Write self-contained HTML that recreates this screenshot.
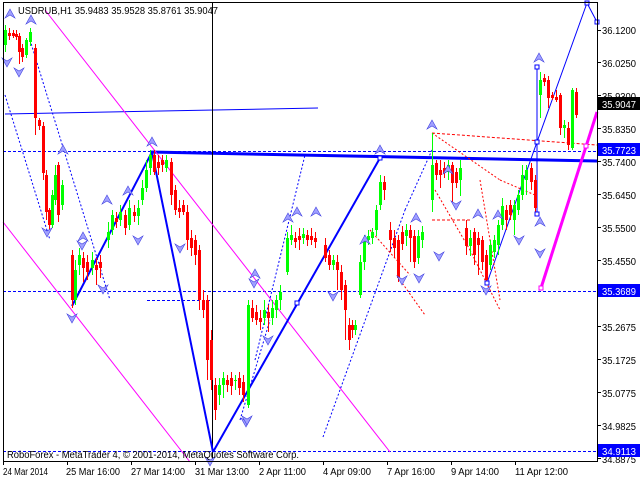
<!DOCTYPE html>
<html><head><meta charset="utf-8"><style>
html,body{margin:0;padding:0;background:#fff;}
svg{display:block;font-family:"Liberation Sans",sans-serif;font-size:10px;}
</style></head><body>
<svg id="c" width="640" height="480" xmlns="http://www.w3.org/2000/svg">
<rect width="640" height="480" fill="#fff"/>
<g id="g"></g>
<path d="M3.5 2 V461.5 H597.5 V2" fill="none" stroke="#000" stroke-width="1"/>
<path d="M3 2.5 H597" stroke="#000"/>
<g fill="#000" id="pl"></g>
<rect x="598" y="97" width="42" height="13" fill="#000"/><text x="602" y="108" fill="#fff" textLength="34" lengthAdjust="spacingAndGlyphs">35.9047</text>
<rect x="598" y="143" width="42" height="13" fill="#0000ff"/><text x="602" y="154" fill="#fff" textLength="34" lengthAdjust="spacingAndGlyphs">35.7723</text>
<rect x="598" y="284" width="42" height="13" fill="#0000ff"/><text x="602" y="295" fill="#fff" textLength="34" lengthAdjust="spacingAndGlyphs">35.3689</text>
<rect x="598" y="444" width="42" height="13" fill="#0000ff"/><text x="602" y="455" fill="#fff" textLength="34" lengthAdjust="spacingAndGlyphs">34.9113</text>
<g fill="#000">
<text x="3" y="475" textLength="45" lengthAdjust="spacingAndGlyphs">24 Mar 2014</text>
<text x="66" y="475" textLength="54" lengthAdjust="spacingAndGlyphs">25 Mar 16:00</text>
<text x="131" y="475" textLength="54" lengthAdjust="spacingAndGlyphs">27 Mar 14:00</text>
<text x="195" y="475" textLength="54" lengthAdjust="spacingAndGlyphs">31 Mar 13:00</text>
<text x="259" y="475" textLength="47" lengthAdjust="spacingAndGlyphs">2 Apr 11:00</text>
<text x="323" y="475" textLength="48" lengthAdjust="spacingAndGlyphs">4 Apr 09:00</text>
<text x="387" y="475" textLength="48" lengthAdjust="spacingAndGlyphs">7 Apr 16:00</text>
<text x="451" y="475" textLength="48" lengthAdjust="spacingAndGlyphs">9 Apr 14:00</text>
<text x="515" y="475" textLength="53" lengthAdjust="spacingAndGlyphs">11 Apr 12:00</text>
</g>
<text x="18" y="14" fill="#000" textLength="200" lengthAdjust="spacingAndGlyphs">USDRUB,H1  35.9483 35.9528 35.8761 35.9047</text>
<text x="7" y="458" fill="#000" textLength="292" lengthAdjust="spacingAndGlyphs">RoboForex - MetaTrader 4, © 2001-2014, MetaQuotes Software Corp.</text>
</svg>
<script>
var g=document.getElementById('g'),s='';
var P=[[34,'36.1200'],[67,'36.0250'],[100,'35.9300'],[133,'35.8350'],[166,'35.7400'],[199,'35.6450'],[232,'35.5500'],[265,'35.4550'],[331,'35.2675'],[364,'35.1725'],[397,'35.0775'],[430,'34.9825'],[463,'34.8875']],ps='';
P.forEach(function(p){ps+='<text x="602" y="'+p[0]+'" textLength="34" lengthAdjust="spacingAndGlyphs">'+p[1]+'</text>';});
document.getElementById('pl').innerHTML=ps;
function L(x1,y1,x2,y2,c,w,d){s+='<line x1="'+x1+'" y1="'+y1+'" x2="'+x2+'" y2="'+y2+'" stroke="'+c+'" stroke-width="'+(w||1)+'"'+(d?' stroke-dasharray="'+d+'"':'')+'/>';}
[3,67,131,195,259,323,387,451,515].forEach(function(x){L(x+0.5,461,x+0.5,465,'#000');});
[30,62,95,128,161,194,227,260,293,326,359,392,425,458].forEach(function(y){L(597,y+0.5,601,y+0.5,'#000');});
L(3,151.5,597,151.5,'#0000ff',1,'3,2');
L(3,291.5,597,291.5,'#0000ff',1,'3,2');
L(3,451.5,597,451.5,'#0000ff',1,'3,2');
L(147,300.5,210,300.5,'#0000ff',1,'3,2');
L(5,114,318,108,'#0000ff',1);
L(150,152,597,161,'#0000ff',3);
L(212.5,2,212.5,461,'#000',1);
L(45,10,390,452,'#ff00ff',1);
L(3,222,190,462,'#ff00ff',1);
L(541,288,597,112,'#ff00ff',3);
L(72,306,152,152,'#0000ff',2);L(152,152,213,452,'#0000ff',2);L(213,452,380,158,'#0000ff',2);
L(487,283,537,142,'#0000ff',1);L(537,142,587,3,'#0000ff',1);L(587,3,597,22,'#0000ff',1);L(537,68,537,214,'#0000ff',1);
L(5,95,50,240,'#0000ff',1,'2,2');L(30,40,110,300,'#0000ff',1,'2,2');
L(255,360,305,155,'#0000ff',1,'2,2');L(323,437,405,210,'#0000ff',1,'2,2');L(405,210,432,150,'#0000ff',1,'2,2');
L(240,420,270,320,'#0000ff',1,'2,2');
L(432,133,597,145,'#ff0000',1,'3,2');L(432,133,500,180,'#ff0000',1,'2,2');L(500,180,535,195,'#ff0000',1,'2,2');
L(432,220,470,220,'#ff0000',1,'3,2');L(435,190,470,250,'#ff0000',1,'2,2');L(470,250,500,310,'#ff0000',1,'2,2');
L(400,280,425,315,'#ff0000',1,'2,2');L(480,180,500,300,'#ff0000',1,'2,2');
L(370,230,410,275,'#ff0000',1,'2,2');
var C=[[5,45,30,25,52],[9,33,36,28,40],[13,33,36,30,38],[16,34,37,30,40],[19,36,52,33,64],[22,48,57,44,62],[26,55,40,38,58],[30,42,32,28,46],
[35,48,118,44,135],[39,120,126,118,130],[43,126,173,122,180],[46,175,212,170,220],[49,210,225,208,232],[52,225,195,190,228],[55,200,175,165,205],[58,165,215,162,222],[62,205,185,180,210],
[72,255,300,250,308],[75,300,270,260,305],[79,265,255,248,275],[83,258,268,252,282],[87,262,272,255,280],[92,268,260,252,275],[96,265,270,258,285],[100,262,268,255,278],
[108,240,232,222,248],[112,230,215,210,235],[116,218,222,212,228],[120,220,212,205,226],[125,215,228,210,235],[129,225,208,200,230],[134,212,216,205,222],[138,216,208,200,225],[142,200,188,180,205],[146,188,170,160,192],[150,168,155,150,175],[154,155,172,150,175],[158,162,168,155,175],[162,160,165,155,172],[166,168,160,155,172],
[171,162,195,158,205],[175,190,210,185,215],[179,208,212,200,218],[183,205,212,200,215],[187,212,240,205,250],[191,238,248,230,256],[195,240,255,235,265],[199,250,300,245,310],[203,300,310,290,318],[207,300,360,295,380],[211,340,380,330,390],[215,385,410,378,420],[219,395,385,378,405],[223,385,378,372,398],[227,380,385,375,392],[231,378,386,372,395],[235,380,380,375,390],[239,378,388,372,395],[243,382,395,375,402],[248,405,305,300,408],[252,308,318,300,322],[256,312,320,305,325],[260,318,322,310,330],[264,318,310,300,325],[268,312,318,305,332],[272,318,308,300,325],[276,310,300,295,318],[280,300,292,285,310],
[287,272,238,232,275],[291,240,235,225,245],[295,238,242,232,248],[299,236,240,228,250],[303,238,234,228,244],[307,235,240,230,246],[311,236,240,228,245],[315,238,242,232,248],
[325,245,258,238,262],[329,255,265,250,270],[333,265,260,255,270],[337,262,270,255,290],[341,272,290,265,300],[345,285,310,280,340],[349,325,340,318,350],[352,325,330,320,338],[355,330,325,320,335],
[360,295,262,255,298],[364,262,240,235,270],[368,240,236,230,245],[372,238,232,228,244],[376,230,210,205,236],[380,205,182,175,210],[384,182,190,176,200],
[390,230,240,222,252],[394,238,248,230,258],[398,240,278,235,282],[402,232,244,226,250],[406,236,230,224,246],[410,230,238,225,262],[414,236,262,230,268],[418,258,236,230,264],[422,240,232,226,248],
[432,200,165,133,212],[436,163,175,160,180],[440,170,175,160,188],[444,168,173,162,178],[448,172,165,160,180],[452,165,183,162,202],[456,172,183,168,188],[460,180,168,160,196],
[466,228,246,220,255],[470,246,238,230,256],[474,232,255,228,265],[478,238,245,232,275],[482,240,262,236,270],[486,255,280,250,285],[490,265,245,240,270],[494,252,240,235,258],[498,245,225,220,255],[502,225,206,198,230],[506,210,220,205,230],[510,205,215,200,220],[514,220,205,200,235],[518,210,195,190,215],[522,195,175,165,200],[526,180,170,165,195],[531,168,182,163,190],[535,180,208,175,215],
[540,95,80,72,118],[544,78,82,74,86],[548,80,98,76,108],[552,95,98,92,100],[556,97,100,90,102],[560,95,128,93,135],[564,128,125,120,138],[568,128,145,122,150],[572,148,90,88,150],[576,92,115,88,118]];
C.forEach(function(k){var x=k[0],o=k[1],c=k[2],col=c>o?'#ff0000':'#00ff00';
s+='<line x1="'+(x+0.5)+'" y1="'+k[3]+'" x2="'+(x+0.5)+'" y2="'+k[4]+'" stroke="'+col+'"/>';
s+='<rect x="'+(x-1)+'" y="'+Math.min(o,c)+'" width="3" height="'+Math.max(1,Math.abs(c-o))+'" fill="'+col+'"/>';});
[[537,67],[537,142],[537,214],[487,283],[297,303],[380,158],[541,288],[586,146],[587,3],[597,22]].forEach(function(p){var col=(p[0]==541||p[0]==586)?'#ff00ff':'#0000ff';s+='<rect x="'+(p[0]-2)+'" y="'+(p[1]-2)+'" width="4" height="4" fill="#fff" stroke="'+col+'"/>';});
function U(x,y){s+='<path d="M'+x+' '+(y-5)+' L'+(x+5)+' '+(y+4)+' L'+x+' '+(y+1)+' L'+(x-5)+' '+(y+4)+'Z" fill="#a0a0ff" stroke="#4040e0" stroke-width="0.6"/>';}
function D(x,y){s+='<path d="M'+x+' '+(y+5)+' L'+(x+5)+' '+(y-4)+' L'+x+' '+(y-1)+' L'+(x-5)+' '+(y-4)+'Z" fill="#a0a0ff" stroke="#4040e0" stroke-width="0.6"/>';}
[[10,14],[31,20],[152,142],[128,191],[107,200],[63,150],[297,212],[316,212],[288,218],[380,150],[432,125],[448,170],[498,215],[539,58],[478,214],[416,218],[365,240],[255,274],[540,222],[83,237]].forEach(function(p){U(p[0],p[1]);});
[[7,62],[19,72],[47,232],[72,318],[103,289],[138,240],[180,248],[246,422],[268,340],[82,245],[247,420],[333,296],[402,280],[419,278],[486,290],[540,253],[456,205],[519,240],[439,256],[254,283],[210,461]].forEach(function(p){D(p[0],p[1]);});
g.innerHTML=s;
</script>
</body></html>
